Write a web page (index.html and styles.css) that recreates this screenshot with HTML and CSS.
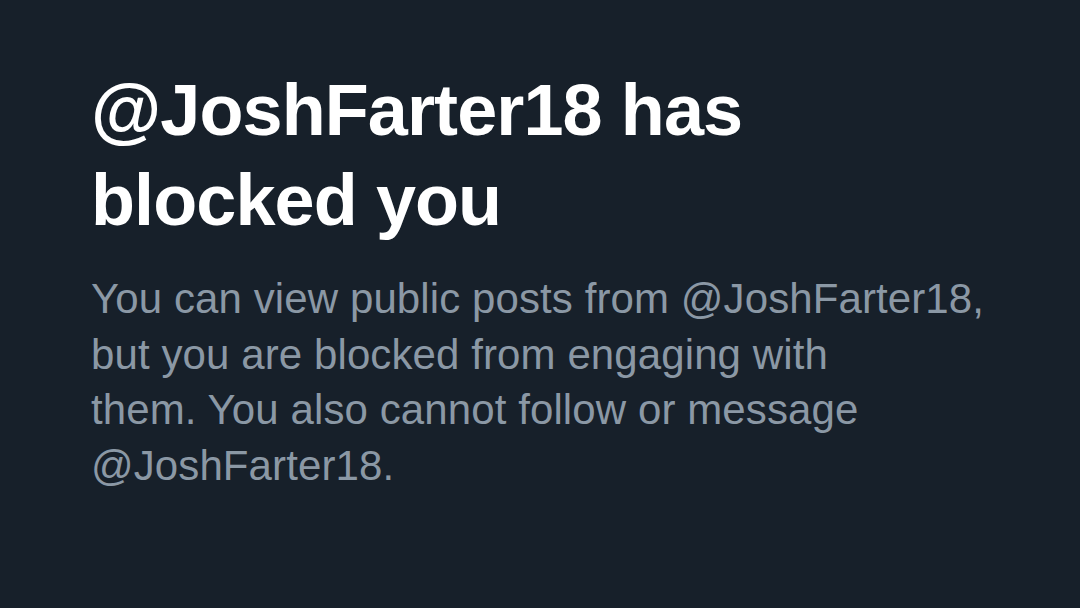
FILE: index.html
```html
<!DOCTYPE html>
<html>
<head>
<meta charset="utf-8">
<link rel="stylesheet" href="styles.css">
</head>
<body>
<main class="blocked">
  <h1 class="title">@JoshFarter18 has<br>blocked you</h1>
  <p class="desc">You can view public posts from @JoshFarter18,<br>but you are blocked from engaging with<br>them. You also cannot follow or message<br>@JoshFarter18.</p>
</main>
</body>
</html>
```

FILE: styles.css
```css
html, body {
  margin: 0;
  padding: 0;
  background: #17202a;
  height: 100%;
}
.blocked {
  padding: 65px 0 0 91px;
  width: 960px;
  font-family: "Liberation Sans", Arial, sans-serif;
}
.title {
  margin: 0;
  color: #ffffff;
  font-size: 72px;
  line-height: 90px;
  font-weight: 700;
  letter-spacing: -0.9px;
}
.desc {
  margin: 26px 0 0 0;
  color: #8b98a5;
  font-size: 42px;
  line-height: 55.5px;
  font-weight: 400;
  letter-spacing: 0.1px;
}
```
